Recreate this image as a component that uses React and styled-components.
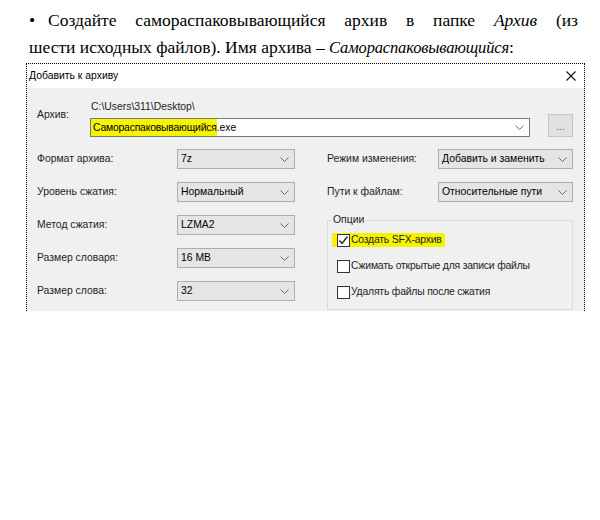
import React from 'react';
import styled, { createGlobalStyle } from 'styled-components';

const Global = createGlobalStyle`
  html, body { margin: 0; padding: 0; background: #fff; }
  body { width: 600px; height: 520px; overflow: hidden; }
`;

const Page = styled.div`
  width: 600px;
  height: 520px;
  box-sizing: border-box;
  padding-top: 7px;
  background: #fff;
`;

const Para = styled.p`
  margin: 0 0 2px 29px;
  width: 549px;
  font-family: "Liberation Serif", "Times New Roman", serif;
  font-size: 17.5px;
  line-height: 27px;
  color: #000;
`;

const Line = styled.span`
  display: block;
  white-space: nowrap;
  text-align: ${(p) => (p.$justify ? 'justify' : 'left')};
  text-align-last: ${(p) => (p.$justify ? 'justify' : 'auto')};
`;

const Bullet = styled.span`
  display: inline-block;
  width: 19px;
  text-align: left;
`;

const Em = styled.i`
  font-style: italic;
  font-size: ${(p) => (p.$tight ? '16.5px' : 'inherit')};
  letter-spacing: ${(p) => (p.$tight ? '-0.15px' : 'normal')};
`;

const Dialog = styled.div`
  margin-left: 26px;
  width: 559px;
  height: 248px;
  box-sizing: border-box;
  border: 1px dotted #000;
  border-bottom: none;
  display: flex;
  flex-direction: column;
  font-family: "Liberation Sans", Arial, sans-serif;
  font-size: 10.4px;
  line-height: 14px;
  color: #1e1e1e;
`;

const TitleBar = styled.div`
  height: 24px;
  flex: none;
  background: #fff;
  display: flex;
  align-items: center;
  justify-content: space-between;
  padding: 0 8px 0 2px;
  color: #000;
`;

const Body = styled.div`
  flex: 1;
  background: #f0f0f0;
  padding: 12px 10px 0 10px;
`;

const ArchiveRow = styled.div`
  display: flex;
  align-items: flex-end;
`;

const ArchiveLabel = styled.div`
  width: 53px;
  align-self: flex-start;
  padding-top: 8px;
`;

const PathBlock = styled.div`
  width: 440px;
  display: flex;
  flex-direction: column;
`;

const PathText = styled.div`
  padding-left: 1px;
  color: #1e1e1e;
`;

const Input = styled.div`
  margin-top: 4px;
  height: 19px;
  box-sizing: border-box;
  border: 1px solid #7a7a7a;
  background: #fff;
  display: flex;
  align-items: center;
  padding: 0 5px 0 0;
  color: #000;
`;

const Mark = styled.span`
  background: #f6f400;
  height: 17px;
  display: inline-flex;
  align-items: center;
  padding-left: 2px;
  letter-spacing: -0.2px;
`;

const InputText = styled.span`
  flex: 1;
`;

const BrowseButton = styled.div`
  margin-left: 18px;
  width: 25px;
  height: 23px;
  box-sizing: border-box;
  border: 1px solid #c4c4c4;
  background: #e1e1e1;
  display: flex;
  align-items: center;
  justify-content: center;
  color: #666;
  font-size: 10px;
  padding-top: 3px;
`;

const FormGrid = styled.div`
  margin-top: 12px;
  display: grid;
  grid-template-columns: 290px 246px;
`;

const Column = styled.div`
  display: flex;
  flex-direction: column;
  gap: 13px;
`;

const FieldRow = styled.div`
  display: flex;
  align-items: center;
`;

const FieldLabel = styled.div`
  width: ${(p) => p.$w}px;
`;

const Select = styled.div`
  width: ${(p) => p.$w}px;
  height: 20px;
  box-sizing: border-box;
  border: 1px solid #adadad;
  background: #e5e5e5;
  display: flex;
  align-items: center;
  justify-content: space-between;
  padding: 0 5px 0 3px;
  color: #000;
`;

const Group = styled.fieldset`
  margin: -2px 0 0 0;
  padding: 6px 0 10px 4px;
  border: 1px solid #dcdcdc;
  min-width: 0;
`;

const Legend = styled.legend`
  padding: 0 1px;
  font-size: 10.4px;
  line-height: 14px;
  color: #1e1e1e;
`;

const CheckList = styled.div`
  display: flex;
  flex-direction: column;
  align-items: flex-start;
  gap: 12px;
`;

const CheckRow = styled.div`
  display: inline-flex;
  align-items: center;
  height: 14px;
  gap: 1px;
  padding: 0 3px 0 5px;
  background: ${(p) => (p.$mark ? '#f6f400' : 'transparent')};
  color: #1e1e1e;
  letter-spacing: -0.2px;
`;

const Box = styled.span`
  width: 13px;
  height: 13px;
  box-sizing: border-box;
  border: 1px solid #333;
  background: #fff;
  display: inline-flex;
  align-items: center;
  justify-content: center;
`;

const Chevron = () => (
  <svg width="9" height="5" viewBox="0 0 9 5">
    <polyline points="0.5,0.5 4.5,4.5 8.5,0.5" fill="none" stroke="#6a6a6a" strokeWidth="1" />
  </svg>
);

const CloseIcon = () => (
  <svg width="10" height="10" viewBox="0 0 10 10">
    <path d="M0.5 0.5 L9.5 9.5 M9.5 0.5 L0.5 9.5" stroke="#111" strokeWidth="1.1" fill="none" />
  </svg>
);

const Check = ({ checked }) => (
  <Box>
    {checked && (
      <svg width="11" height="11" viewBox="0 0 11 11">
        <path d="M1.5 5.5 L4 8.5 L9.5 1.5" stroke="#222" strokeWidth="1.4" fill="none" />
      </svg>
    )}
  </Box>
);

const leftFields = [
  ['Формат архива:', '7z'],
  ['Уровень сжатия:', 'Нормальный'],
  ['Метод сжатия:', 'LZMA2'],
  ['Размер словаря:', '16 MB'],
  ['Размер слова:', '32'],
];

const rightFields = [
  ['Режим изменения:', 'Добавить и заменить'],
  ['Пути к файлам:', 'Относительные пути'],
];

const options = [
  ['Создать SFX-архив', true],
  ['Сжимать открытые для записи файлы', false],
  ['Удалять файлы после сжатия', false],
];

export default function App() {
  return (
    <>
      <Global />
      <Page>
        <Para>
          <Line $justify>
            <Bullet>•</Bullet>Создайте самораспаковывающийся архив в папке <Em>Архив</Em> (из
          </Line>
          <Line>
            шести исходных файлов). Имя архива – <Em $tight>Самораспаковывающийся</Em>:
          </Line>
        </Para>
        <Dialog>
          <TitleBar>
            <span>Добавить к архиву</span>
            <CloseIcon />
          </TitleBar>
          <Body>
            <ArchiveRow>
              <ArchiveLabel>Архив:</ArchiveLabel>
              <PathBlock>
                <PathText>C:\Users\311\Desktop\</PathText>
                <Input>
                  <InputText>
                    <Mark>Самораспаковывающийся</Mark>.exe
                  </InputText>
                  <Chevron />
                </Input>
              </PathBlock>
              <BrowseButton>...</BrowseButton>
            </ArchiveRow>
            <FormGrid>
              <Column>
                {leftFields.map(([label, value]) => (
                  <FieldRow key={label}>
                    <FieldLabel $w={140}>{label}</FieldLabel>
                    <Select $w={118}>
                      <span>{value}</span>
                      <Chevron />
                    </Select>
                  </FieldRow>
                ))}
              </Column>
              <Column>
                {rightFields.map(([label, value]) => (
                  <FieldRow key={label}>
                    <FieldLabel $w={111}>{label}</FieldLabel>
                    <Select $w={135}>
                      <span>{value}</span>
                      <Chevron />
                    </Select>
                  </FieldRow>
                ))}
                <Group>
                  <Legend>Опции</Legend>
                  <CheckList>
                    {options.map(([text, on]) => (
                      <CheckRow key={text} $mark={on}>
                        <Check checked={on} />
                        <span>{text}</span>
                      </CheckRow>
                    ))}
                  </CheckList>
                </Group>
              </Column>
            </FormGrid>
          </Body>
        </Dialog>
      </Page>
    </>
  );
}
